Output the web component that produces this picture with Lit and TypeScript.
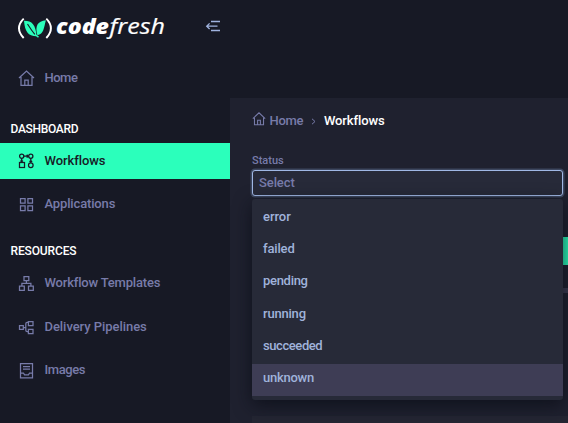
import { LitElement, html, css, svg } from "lit";
import { customElement, property } from "lit/decorators.js";
import { classMap } from "lit/directives/class-map.js";
import { styleMap } from "lit/directives/style-map.js";

const icons: Record<string, unknown> = {
  home: svg`<path d="M1 8 8.5 1 16 8M3 7V15.4H14V7M6.8 15V10H10.2V15"/>`,
  workflows: svg`<circle cx="3.7" cy="3.2" r="2.1"/><circle cx="12.8" cy="3.2" r="2.1"/><rect x="1.5" y="9.5" width="5" height="5"/><circle cx="12.8" cy="12.2" r="2.3"/><path d="M6 3.2H10.5M8.7 1.8 10.2 3.2 8.7 4.6M3.7 5.4V9.3M2.4 7.6 3.7 8.9 5 7.6M12.8 5.4V9.8M11.5 7.9 12.8 9.3 14.1 7.9"/>`,
  apps: svg`<path d="M2.5 2.5h4.6v4.6H2.5zM9.9 2.5h4.6v4.6H9.9zM2.5 9.9h4.6v4.6H2.5zM9.9 9.9h4.6v4.6H9.9z"/>`,
  templates: svg`<path d="M6 1.5h4.8v4.2H6zM1.5 11h4.8v4.4H1.5zM10.5 11h4.8v4.4h-4.8zM8.4 5.7V8.4M3.9 11V8.4H12.9V11"/>`,
  pipelines: svg`<path d="M1.5 6.6h3.8v3.8H1.5zM10.4 2.5h4.6v4.2h-4.6zM10.4 10.4h4.6v4.2h-4.6zM5.4 8.5H7.8M10.4 3.4H9.2Q7.8 3.4 7.8 4.8V11.3Q7.8 12.7 9.2 12.7H10.4"/>`,
  images: svg`<path d="M2.5 1.5h12v14.4h-12zM5 4.7h7M5 7.2h7M2.5 11H5.4L6.6 12.9H10.4L11.6 11H14.5"/>`,
};

const options: [string, number][] = [
  ["error", -0.05],
  ["failed", -0.15],
  ["pending", -0.3],
  ["running", -0.2],
  ["succeeded", -0.42],
  ["unknown", -0.27],
];

@customElement("nav-item")
class NavItem extends LitElement {
  @property() icon = "";
  @property() label = "";
  @property({ type: Number }) tracking = 0;
  @property({ type: Boolean }) active = false;

  static styles = css`
    :host { display: block; }
    .item { display: flex; align-items: center; height: 36px; padding: 0 0 1px 18px; box-sizing: border-box; color: #777ba9; font-weight: 500; font-size: 13px; white-space: nowrap; }
    .active { background: #2bffbb; color: #171925; }
    svg { width: 17px; height: 17px; margin: 1px 9.5px 0 0; fill: none; stroke: currentColor; stroke-width: 1.25; }
  `;
  render() {
    return html`<div class=${classMap({ item: true, active: this.active })}>
      <svg viewBox="0 0 17 17">${icons[this.icon]}</svg>
      <span style=${styleMap({ letterSpacing: `${this.tracking}px` })}>${this.label}</span>
    </div>`;
  }
}

@customElement("app-root")
class AppRoot extends LitElement {
  static styles = css`
    :host { display: block; width: 568px; height: 423px; overflow: hidden; background: #171925; font-family: Roboto, sans-serif; }
    * { box-sizing: border-box; }
    .shell { display: flex; height: 423px; }
    .side { width: 230px; flex: none; }
    .brand { height: 60px; display: flex; padding: 14px 0 0 17px; }
    .mark { width: 36px; height: 28px; flex: none; }
    .word { margin-left: 3px; width: 111px; height: 28px; overflow: visible; }
    .bold { font: italic 800 21px "Open Sans", sans-serif; fill: #fff; }
    .light { font: italic 400 21px "Open Sans", sans-serif; fill: #fff; stroke: #fff; stroke-width: .2; }
    .collapse { width: 16px; height: 14px; margin: 5px 0 0 38px; fill: none; stroke: #a0b3df; stroke-width: 1.3; }
    .heading { height: 14px; line-height: 14px; padding-left: 10.5px; font-size: 12px; font-weight: 500; color: #fff; }
    .dash { margin: 26px 0 7px; letter-spacing: -.3px; }
    .res { margin: 22px 0 7px; letter-spacing: -.13px; }
    .gap7 { margin-top: 7px; }
    .gap8 { margin-top: 8px; }
    .main { flex: 1; margin-top: 98px; background: #1f212f; padding: 14px 5px 0 22px; height: 325px; position: relative; }
    .crumbs { display: flex; height: 17px; align-items: center; font-size: 13px; font-weight: 500; letter-spacing: -.3px; color: #777ba9; }
    .crumbs .house { width: 14px; height: 14px; fill: none; stroke: currentColor; stroke-width: 1.3; margin: -3px 3.5px 0 0; }
    .chev { width: 5px; height: 7px; margin: 2px 8px 0 7.7px; fill: none; stroke: #777ba9; }
    .here { color: #fff; letter-spacing: -.1px; }
    .label { height: 13px; line-height: 13px; margin-top: 25px; font-size: 11px; font-weight: 500; letter-spacing: 0; color: #777ba9; }
    .select { height: 26px; margin-top: 3px; width: 311px; border: 1px solid #a0b8e5; border-radius: 3px; background: #272a39; box-shadow: 0 0 0 1.5px #3d475f; color: #777ba9; font-size: 13px; font-weight: 500; line-height: 24px; padding-left: 6px; letter-spacing: -.1px; }
    .panel { position: absolute; left: 22px; top: 101px; width: 311px; height: 201px; padding: 4px 0; border-radius: 3px; background: #272a38; box-shadow: 0 5px 18px rgba(10,12,22,.75); overflow: hidden; }
    .option { height: 32.2px; line-height: 27px; padding-left: 11px; font-size: 13px; font-weight: 500; color: #a0b3db; }
    .hover { background: #3e3d55; }
    .button { position: absolute; left: 320px; top: 139px; width: 30px; height: 28px; background: #2bffbb; }
    .rule { position: absolute; left: 320px; top: 190px; width: 30px; height: 5px; background: #3a3b50; }
    .card { position: absolute; left: 22px; top: 318px; width: 320px; height: 10px; background: #242633; }
  `;
  render() {
    return html`<div class="shell">
      <aside class="side">
        <div class="brand">
          <svg class="mark" viewBox="0 0 36 28">
            <path d="M6.7 4.6Q-2.7 14 6.7 24M29.3 4.6Q38.5 14 29.3 24" fill="none" stroke="#fff" stroke-width="1.9"/>
            <path d="M7 6.8C15 6.7 18.7 10.6 19.6 22.3C11 22.3 7.9 17.5 7 6.8ZM28.9 6.3C20.5 7.2 17.8 12 20.4 21.3C26.8 20 26.8 14 28.9 6.3Z" fill="#2bffbb"/>
            <path d="M10.5 10C13 14 15 17 17.8 20.3" fill="none" stroke="#171925" stroke-width="1.1"/>
            <path d="M18.2 21Q20 21.5 21.5 23.2" fill="none" stroke="#2bffbb" stroke-width="1.4"/>
          </svg>
          <svg class="word" viewBox="0 0 111 28">
            <text class="bold" x="0" y="20.4" textLength="53" lengthAdjust="spacingAndGlyphs">code</text>
            <text class="light" x="53.5" y="20.4" textLength="55.5" lengthAdjust="spacingAndGlyphs">fresh</text>
          </svg>
          <svg class="collapse" viewBox="0 0 16 14"><path d="M6 2.5H15M2 7.2H12.5M6 11.5H15M4.6 4.4 1.7 7.2 4.6 10"/></svg>
        </div>
        <nav-item icon="home" label="Home" tracking="-0.5"></nav-item>
        <div class="heading dash">DASHBOARD</div>
        <nav-item icon="workflows" label="Workflows" tracking="-0.08" active></nav-item>
        <nav-item class="gap7" icon="apps" label="Applications" tracking="-0.15"></nav-item>
        <div class="heading res">RESOURCES</div>
        <nav-item icon="templates" label="Workflow Templates" tracking="-0.19"></nav-item>
        <nav-item class="gap8" icon="pipelines" label="Delivery Pipelines" tracking="-0.05"></nav-item>
        <nav-item class="gap7" icon="images" label="Images" tracking="-0.4"></nav-item>
      </aside>
      <main class="main">
        <div class="crumbs">
          <svg class="house" viewBox="0 0 17 17">${icons.home}</svg><span>Home</span>
          <svg class="chev" viewBox="0 0 5 7"><path d="M1 .8 4 3.5 1 6.2"/></svg><span class="here">Workflows</span>
        </div>
        <div class="label">Status</div>
        <div class="select">Select</div>
        <div class="button"></div><div class="rule"></div><div class="card"></div>
        <div class="panel">
          ${options.map(
            ([name, tracking]) => html`<div
              class=${classMap({ option: true, hover: name === "unknown" })}
              style=${styleMap({ letterSpacing: `${tracking}px` })}
            >${name}</div>`
          )}
        </div>
      </main>
    </div>`;
  }
}
